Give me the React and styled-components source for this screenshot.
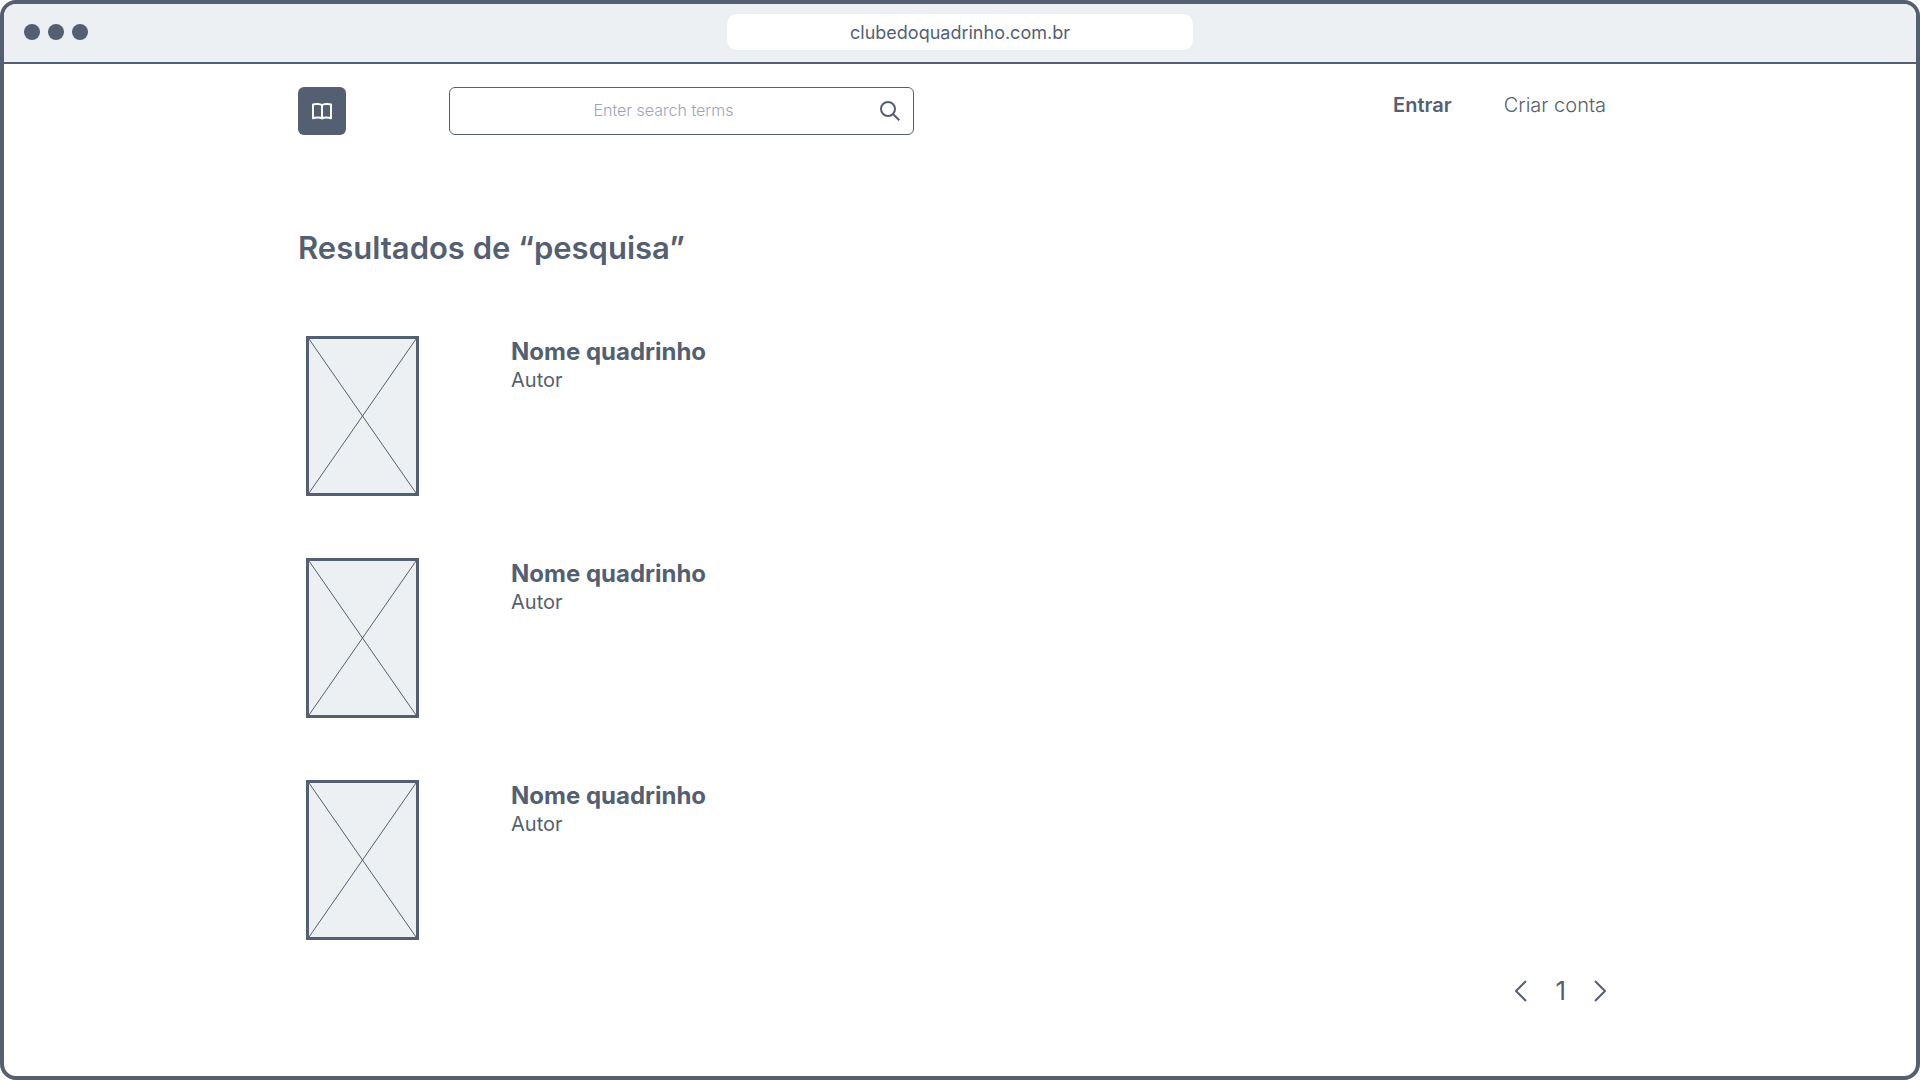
import React from "react";
import styled, { createGlobalStyle } from "styled-components";

const ink = "#545f71";
const mist = "#ecf0f3";

const GlobalStyle = createGlobalStyle`
  *, *::before, *::after { box-sizing: border-box; }
  body {
    margin: 0;
    background: #fff;
    color: ${ink};
    font-family: Inter, "Liberation Sans", sans-serif;
  }
`;

const BrowserWindow = styled.div`
  display: flex;
  flex-direction: column;
  min-height: 100vh;
  border: 4px solid ${ink};
  border-radius: 16px;
  overflow: hidden;
  background: #fff;
`;

const TitleBar = styled.div`
  display: grid;
  grid-template-columns: 1fr minmax(200px, 466px) 1fr;
  align-items: start;
  height: 60px;
  padding: 10px 20px;
  background: ${mist};
  border-bottom: 2px solid ${ink};
`;

const WindowDots = styled.div`
  display: flex;
  align-items: center;
  gap: 8px;
  height: 36px;
`;

const Dot = styled.span`
  width: 16px;
  height: 16px;
  border-radius: 50%;
  background: ${ink};
`;

const AddressField = styled.input`
  width: 100%;
  height: 36px;
  padding: 0 12px;
  border: 0;
  border-radius: 10px;
  background: #fff;
  color: ${ink};
  font: 400 18px Inter, "Liberation Sans", sans-serif;
  text-align: center;
`;

const Page = styled.div`
  flex: 1;
  padding: 23px 310px 0 294px;

  @media (max-width: 1400px) {
    padding: 23px 48px 48px;
  }
`;

const Header = styled.header`
  display: flex;
  align-items: flex-start;
`;

const Logo = styled.a`
  display: flex;
  flex: none;
  align-items: center;
  justify-content: center;
  width: 48px;
  height: 48px;
  margin-right: 103px;
  border-radius: 6px;
  background: ${ink};
  color: #fff;
`;

const SearchForm = styled.form`
  display: flex;
  align-items: center;
  flex: 0 1 465px;
  height: 48px;
  border: 1px solid ${ink};
  border-radius: 6px;
`;

const SearchField = styled.input`
  flex: 1;
  min-width: 0;
  height: 100%;
  padding: 0 0 2px 10px;
  border: 0;
  outline: 0;
  background: transparent;
  color: ${ink};
  font: 300 16px Inter, "Liberation Sans", sans-serif;
  text-align: center;

  &::placeholder {
    color: #9ba5b7;
    opacity: 1;
  }
`;

const IconButton = styled.button`
  display: flex;
  align-items: center;
  justify-content: center;
  width: ${({ $width }) => $width}px;
  height: 32px;
  padding: 0;
  border: 0;
  background: transparent;
  color: ${ink};
  cursor: pointer;
`;

const AccountNav = styled.nav`
  display: flex;
  gap: 52px;
  margin-left: auto;
`;

const AccountLink = styled.a`
  color: ${ink};
  font-size: 20px;
  font-weight: ${({ $strong }) => ($strong ? 600 : 300)};
  line-height: 36px;
  text-decoration: none;
  white-space: nowrap;
`;

const Heading = styled.h1`
  margin: 93px 0 68px;
  font-size: 31px;
  font-weight: 600;
  line-height: 40px;
`;

const Results = styled.ul`
  display: grid;
  gap: 62px;
  margin: 0;
  padding: 0 0 0 8px;
  list-style: none;
`;

const Comic = styled.li`
  display: flex;
  gap: 92px;
`;

const Cover = styled.svg`
  display: block;
  flex: none;
  width: 113px;
  height: 160px;
  border: 3px solid ${ink};
  background: ${mist};
`;

const ComicName = styled.h2`
  margin: 0;
  font-size: 24px;
  font-weight: 700;
  line-height: 32px;
`;

const Author = styled.p`
  margin: 0;
  font-size: 20px;
  line-height: 24px;
`;

const Pagination = styled.nav`
  display: flex;
  align-items: center;
  justify-content: flex-end;
  gap: 28px;
  margin-top: 35px;
`;

const CurrentPage = styled.span`
  font-size: 26px;
  line-height: 32px;
`;

const comics = [
  { id: 1, name: "Nome quadrinho", author: "Autor" },
  { id: 2, name: "Nome quadrinho", author: "Autor" },
  { id: 3, name: "Nome quadrinho", author: "Autor" },
];

function BookIcon() {
  return (
    <svg width="22" height="18" viewBox="0 0 22 18" fill="none" stroke="currentColor" strokeWidth="2" strokeLinejoin="round" aria-hidden="true">
      <path d="M11 3C9.200 1.700 4.500 1.700 2 2.400V16.200C4.500 15.200 9.200 15.200 11 16.400C12.800 15.200 17.500 15.200 20 16.200V2.400C17.500 1.700 12.800 1.700 11 3ZM11 3V16.400" />
    </svg>
  );
}

function SearchIcon() {
  return (
    <svg width="20" height="20" viewBox="0 0 20 20" fill="none" stroke="currentColor" strokeWidth="2" aria-hidden="true">
      <circle cx="8" cy="8" r="7" />
      <path d="M13 13L19.300 19.300" />
    </svg>
  );
}

function Chevron({ points }) {
  return (
    <svg width="12" height="22" viewBox="0 0 12 22" fill="none" stroke="currentColor" strokeWidth="2" strokeLinejoin="round" aria-hidden="true">
      <polyline points={points} />
    </svg>
  );
}

export default function App() {
  return (
    <>
      <GlobalStyle />
      <BrowserWindow>
        <TitleBar>
          <WindowDots>
            <Dot />
            <Dot />
            <Dot />
          </WindowDots>
          <AddressField type="text" aria-label="Endereço" defaultValue="clubedoquadrinho.com.br" />
        </TitleBar>
        <Page>
          <Header>
            <Logo href="#" aria-label="Clube do Quadrinho">
              <BookIcon />
            </Logo>
            <SearchForm role="search" onSubmit={(event) => event.preventDefault()}>
              <SearchField type="text" aria-label="Pesquisar" placeholder="Enter search terms" />
              <IconButton $width={46} type="submit" aria-label="Pesquisar">
                <SearchIcon />
              </IconButton>
            </SearchForm>
            <AccountNav aria-label="Conta">
              <AccountLink href="#entrar" $strong>Entrar</AccountLink>
              <AccountLink href="#criar-conta">Criar conta</AccountLink>
            </AccountNav>
          </Header>
          <main>
            <Heading>Resultados de “pesquisa”</Heading>
            <Results>
              {comics.map((comic) => (
                <Comic key={comic.id}>
                  <Cover viewBox="0 0 107 154" preserveAspectRatio="none" aria-hidden="true">
                    <path d="M0 0L107 154M107 0L0 154" stroke={ink} strokeWidth="1" />
                  </Cover>
                  <div>
                    <ComicName>{comic.name}</ComicName>
                    <Author>{comic.author}</Author>
                  </div>
                </Comic>
              ))}
            </Results>
            <Pagination aria-label="Paginação">
              <IconButton $width={12} type="button" aria-label="Página anterior">
                <Chevron points="11,1 1,11 11,21" />
              </IconButton>
              <CurrentPage aria-current="page">1</CurrentPage>
              <IconButton $width={12} type="button" aria-label="Próxima página">
                <Chevron points="1,1 11,11 1,21" />
              </IconButton>
            </Pagination>
          </main>
        </Page>
      </BrowserWindow>
    </>
  );
}
